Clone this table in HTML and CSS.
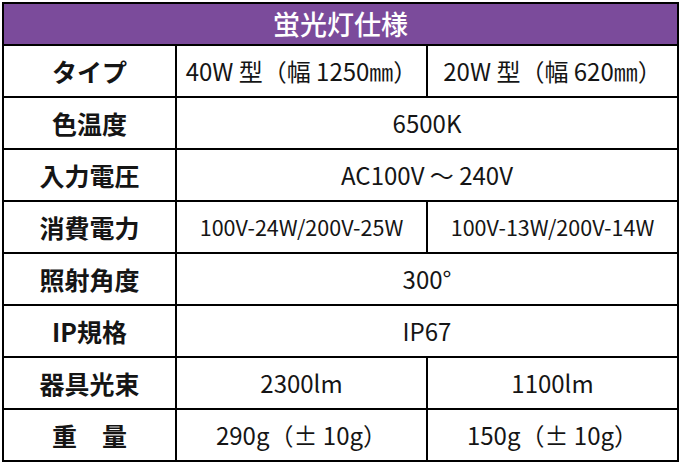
FILE: index.html
```html
<!DOCTYPE html>
<html lang="ja">
<head>
<meta charset="utf-8">
<link rel="stylesheet" href="styles.css">
</head>
<body>
<table class="spec">
  <colgroup>
    <col class="c-label">
    <col class="c-a">
    <col class="c-b">
  </colgroup>
  <thead>
    <tr><th colspan="3" class="title">蛍光灯仕様</th></tr>
  </thead>
  <tbody>
    <tr><th>タイプ</th><td>40W 型（幅 1250㎜）</td><td>20W 型（幅 620㎜）</td></tr>
    <tr><th>色温度</th><td colspan="2">6500K</td></tr>
    <tr><th>入力電圧</th><td colspan="2">AC100V ～ 240V</td></tr>
    <tr><th>消費電力</th><td class="narrow">100V-24W/200V-25W</td><td class="narrow">100V-13W/200V-14W</td></tr>
    <tr><th>照射角度</th><td colspan="2">300°</td></tr>
    <tr><th>IP規格</th><td colspan="2">IP67</td></tr>
    <tr><th>器具光束</th><td>2300lm</td><td>1100lm</td></tr>
    <tr><th>重　量</th><td>290g（± 10g）</td><td>150g（± 10g）</td></tr>
  </tbody>
</table>
</body>
</html>
```
FILE: styles.css
```css
html, body {
  margin: 0;
  padding: 0;
  background: #ffffff;
}
body {
  padding: 2px 0 0 2px;
  font-family: "Noto Sans CJK JP", "Noto Sans", sans-serif;
  color: #151515;
}
.spec {
  border-collapse: collapse;
  width: 675px;
  table-layout: fixed;
}
.c-label { width: 173px; }
.c-a { width: 251px; }
.c-b { width: 251px; }
.spec th, .spec td {
  border: 2px solid #000000;
  height: 50px;
  padding: 0;
  text-align: center;
  vertical-align: middle;
  font-size: 24px;
  line-height: 28px;
  white-space: nowrap;
}
.spec th {
  font-size: 25px;
  font-weight: 700;
}
.spec td {
  font-weight: 400;
}
.spec .title {
  height: 40px;
  background: #7b4b9b;
  color: #ffffff;
  font-size: 27px;
  font-weight: 500;
}
.spec .narrow {
  font-size: 21.5px;
}
```
